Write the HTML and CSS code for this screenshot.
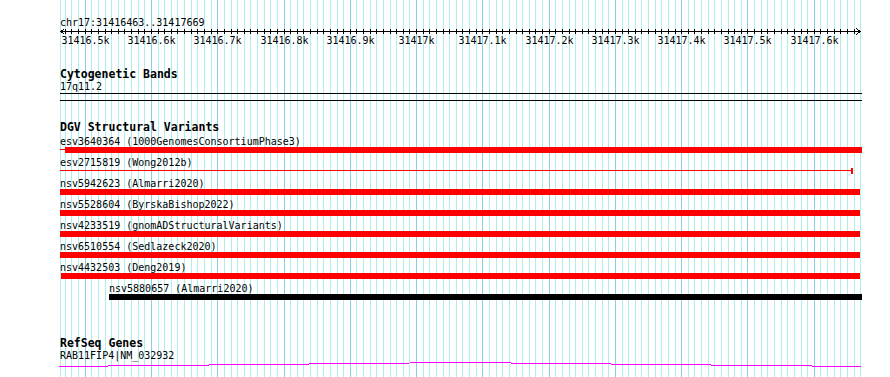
FILE: index.html
```html
<!DOCTYPE html>
<html lang="en">
<head>
    <meta charset="UTF-8">
    <meta name="viewport" content="width=device-width, initial-scale=1.0">
    <title>chr17:31416463..31417669</title>
    <link rel="stylesheet" href="styles.css">
</head>
<body>
    <div class="browser">
        <svg id="grid" class="grid" width="890" height="377"></svg>

        <div class="ruler">
            <div class="locus">chr17:31416463..31417669</div>
            <svg id="scale" class="scale" width="890" height="20">
                <line class="axis" x1="60" y1="3.5" x2="861" y2="3.5"></line>
                <polyline class="axis" points="64.5,0.5 61,3.5 64.5,6.5"></polyline>
                <polyline class="axis" points="856.5,0.5 860,3.5 856.5,6.5"></polyline>
            </svg>
        </div>

        <div class="track cyto">
            <div class="track-title">Cytogenetic Bands</div>
            <div class="feature-label">17q11.2</div>
            <div class="band"></div>
        </div>

        <div class="track dgv">
            <div class="track-title">DGV Structural Variants</div>
            <div class="feature">
                <div class="feature-label">esv3640364 (1000GenomesConsortiumPhase3)</div>
                <div class="span">
                    <div class="thin red" style="width:5px"></div>
                    <div class="bar red" style="width:797px"></div>
                </div>
            </div>
            <div class="feature">
                <div class="feature-label">esv2715819 (Wong2012b)</div>
                <div class="span">
                    <div class="thin red" style="width:791px"></div>
                    <div class="bar red" style="width:2px"></div>
                </div>
            </div>
            <div class="feature">
                <div class="feature-label">nsv5942623 (Almarri2020)</div>
                <div class="span">
                    <div class="bar red" style="width:800px"></div>
                </div>
            </div>
            <div class="feature">
                <div class="feature-label">nsv5528604 (ByrskaBishop2022)</div>
                <div class="span">
                    <div class="bar red" style="width:800px"></div>
                </div>
            </div>
            <div class="feature">
                <div class="feature-label">nsv4233519 (gnomADStructuralVariants)</div>
                <div class="span">
                    <div class="bar red" style="width:800px"></div>
                </div>
            </div>
            <div class="feature">
                <div class="feature-label">nsv6510554 (Sedlazeck2020)</div>
                <div class="span">
                    <div class="bar red" style="width:800px"></div>
                </div>
            </div>
            <div class="feature">
                <div class="feature-label">nsv4432503 (Deng2019)</div>
                <div class="span" style="margin-left:1px">
                    <div class="bar red" style="width:799px"></div>
                </div>
            </div>
            <div class="feature" style="margin-left:49px">
                <div class="feature-label">nsv5880657 (Almarri2020)</div>
                <div class="span">
                    <div class="bar black" style="width:753px"></div>
                </div>
            </div>
        </div>

        <div class="track refseq">
            <div class="track-title">RefSeq Genes</div>
            <div class="feature-label">RAB11FIP4|NM_032932</div>
            <svg class="gene" width="802" height="8">
                <polyline class="intron" points="0,5.5 401,1.5 802,5.5"></polyline>
            </svg>
        </div>
    </div>

    <script>
        var start = 31416462, end = 31417669;
        var x0 = 60, viewWidth = 800;
        var bpPerPx = (end - start) / viewWidth;
        var svgNS = "http://www.w3.org/2000/svg";

        function toX(pos) {
            return Math.floor(x0 + (pos - start) / bpPerPx) + 0.5;
        }

        function add(parent, tag, attrs, text) {
            var el = document.createElementNS(svgNS, tag);
            for (var key in attrs) {
                el.setAttribute(key, attrs[key]);
            }
            if (text) el.textContent = text;
            parent.appendChild(el);
            return el;
        }

        var grid = document.getElementById("grid");
        var scale = document.getElementById("scale");

        add(grid, "line", { x1: toX(start), y1: 0, x2: toX(start), y2: 377, "class": "minor" });
        add(grid, "line", { x1: toX(end), y1: 0, x2: toX(end), y2: 377, "class": "minor" });

        for (var pos = Math.ceil(start / 10) * 10; pos < end; pos += 10) {
            var x = toX(pos);
            var major = pos % 100 === 0;
            add(grid, "line", { x1: x, y1: 0, x2: x, y2: 377, "class": major ? "major" : "minor" });
            add(scale, "line", { x1: x, y1: 1, x2: x, y2: 6, "class": "tick" });
            if (major) {
                add(scale, "text", { x: x, y: 16, "class": "tick-label" }, (pos / 1000) + "k");
            }
        }
    </script>
</body>
</html>
```

FILE: styles.css
```css
body {
    margin: 0;
    background: #fff;
    color: #000;
    font-family: "DejaVu Sans Mono", monospace;
    font-size: 10px;
}
.browser {
    position: relative;
    width: 890px;
    height: 377px;
    overflow: hidden;
}
.grid {
    position: absolute;
    top: 0;
    left: 0;
    z-index: 0;
}
.grid line {
    stroke-width: 1;
    shape-rendering: crispEdges;
}
.grid .minor {
    stroke: #afeeee;
}
.grid .major {
    stroke: #87ceeb;
}
.ruler, .track {
    position: relative;
    z-index: 1;
}
.ruler {
    padding-top: 17px;
}
.locus {
    line-height: 11px;
    padding-left: 60px;
}
.scale {
    display: block;
}
.scale .axis, .scale .tick {
    stroke: #000;
    stroke-width: 1;
    fill: none;
    shape-rendering: crispEdges;
}
.tick-label {
    font-family: "DejaVu Sans Mono", monospace;
    font-size: 10px;
    text-anchor: middle;
    fill: #000;
}
.track {
    padding-left: 60px;
}
.track-title {
    font-weight: bold;
    font-size: 11.5px;
    line-height: 14px;
}
.feature-label {
    line-height: 11px;
    white-space: nowrap;
}
.cyto {
    margin-top: 19px;
}
.band {
    margin-top: 1px;
    width: 802px;
    height: 6px;
    border-top: 1px solid #000;
    border-bottom: 1px solid #000;
}
.dgv {
    margin-top: 19px;
}
.dgv .track-title {
    margin-bottom: 2px;
}
.feature {
    height: 21px;
}
.span {
    display: flex;
    height: 6px;
}
.thin {
    height: 1px;
    margin-top: 2px;
}
.bar {
    height: 6px;
}
.red {
    background: #f00;
}
.black {
    background: #000;
}
.refseq {
    margin-top: 32px;
}
.gene {
    display: block;
    margin-left: -1px;
}
.intron {
    fill: none;
    stroke: #f0f;
    stroke-width: 1;
    shape-rendering: crispEdges;
}
```
